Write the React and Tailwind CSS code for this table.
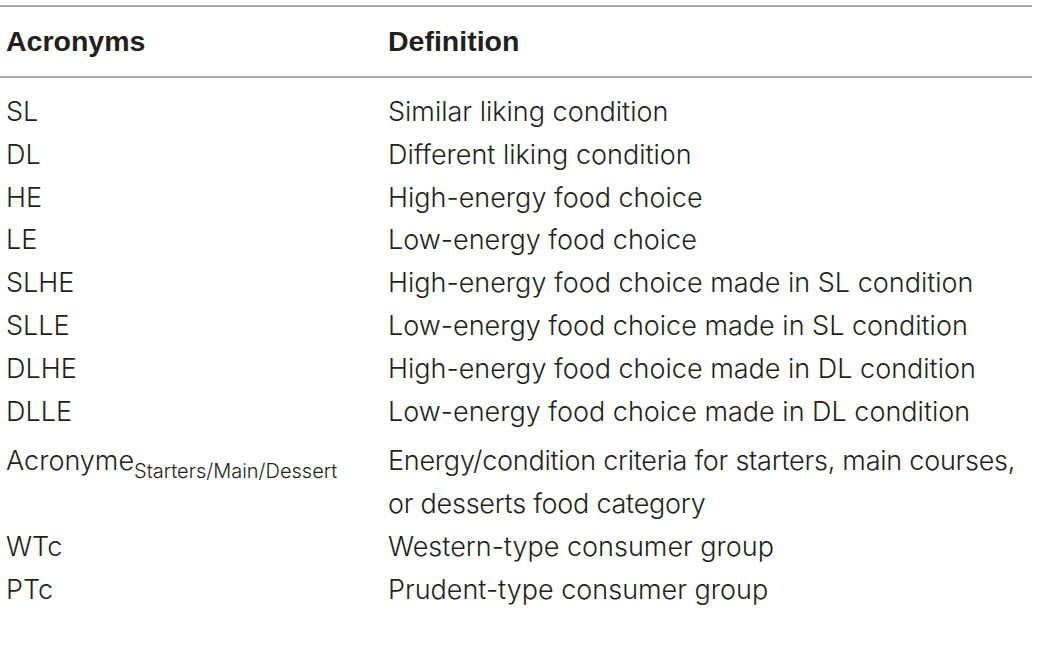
const rows = [
  ['SL', 'Similar liking condition'],
  ['DL', 'Different liking condition'],
  ['HE', 'High-energy food choice'],
  ['LE', 'Low-energy food choice'],
  ['SLHE', 'High-energy food choice made in SL condition'],
  ['SLLE', 'Low-energy food choice made in SL condition'],
  ['DLHE', 'High-energy food choice made in DL condition'],
  ['DLLE', 'Low-energy food choice made in DL condition'],
  [
    <span>
      Acronyme<sub className="text-[20px] align-[-3px]">Starters/Main/Dessert</sub>
    </span>,
    <span className="whitespace-nowrap tracking-[-0.25px]">
      Energy/condition criteria for starters, main courses,
      <br />
      or desserts food category
    </span>,
    true,
  ],
  ['WTc', 'Western-type consumer group'],
  ['PTc', 'Prudent-type consumer group'],
];

export default function App() {
  return (
    <div className="w-[1040px] h-[646px] bg-white text-[#231f20] pt-[5px]">
      <div className="w-[1032px]">
        {/* Header */}
        <div
          className="grid grid-cols-[388px_1fr] border-t-2 border-b-2 border-[#a7a7a7] h-[73px] items-center text-[28.5px] font-bold"
          style={{ fontFamily: '"Liberation Sans", Arial, sans-serif' }}
        >
          <div className="pl-[6px]">Acronyms</div>
          <div>Definition</div>
        </div>

        {/* Body */}
        <div
          className="pt-[13px] text-[27px] font-light leading-[42.8px]"
          style={{ fontFamily: 'Inter, "Liberation Sans", sans-serif' }}
        >
          {rows.map(([abbr, def, tall], i) => (
            <div
              key={i}
              className={`grid grid-cols-[388px_1fr] ${tall ? 'pt-[7px]' : ''}`}
            >
              <div className="pl-[6px]">{abbr}</div>
              <div>{def}</div>
            </div>
          ))}
        </div>
      </div>
    </div>
  );
}
